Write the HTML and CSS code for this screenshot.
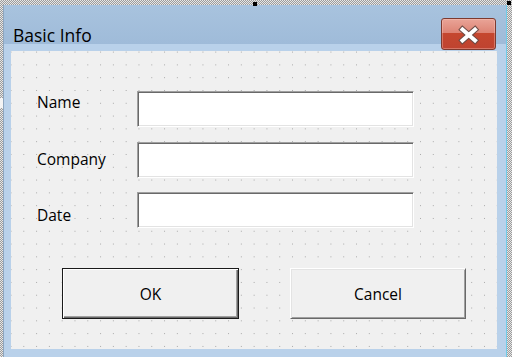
FILE: index.html
```html
<!DOCTYPE html>
<html>
<head>
<meta charset="utf-8">
<link rel="stylesheet" href="styles.css">
</head>
<body>
<div class="sel">
  <span class="handle h-top"></span>
  <span class="handle h-tr"></span>
  <span class="handle-w h-left"></span>
  <div class="win">
    <div class="title">
      <span class="title-text">Basic Info</span>
      <div class="close">
        <svg width="55" height="32" viewBox="0 0 55 32">
          <g stroke-linecap="square">
            <line x1="21.5" y1="11.5" x2="34" y2="22.5" stroke="#6b4a44" stroke-width="6"/>
            <line x1="34" y1="11.5" x2="21.5" y2="22.5" stroke="#6b4a44" stroke-width="6"/>
            <line x1="21.5" y1="11.5" x2="34" y2="22.5" stroke="#ffffff" stroke-width="4"/>
            <line x1="34" y1="11.5" x2="21.5" y2="22.5" stroke="#ffffff" stroke-width="4"/>
          </g>
        </svg>
      </div>
    </div>
    <div class="client">
      <div class="form">
        <div class="labels">
          <div class="label">Name</div>
          <div class="label">Company</div>
          <div class="label">Date</div>
        </div>
        <div class="fields">
          <div class="tb"></div>
          <div class="tb"></div>
          <div class="tb"></div>
        </div>
      </div>
      <div class="buttons">
        <div class="btn ok">OK</div>
        <div class="btn cancel">Cancel</div>
      </div>
    </div>
  </div>
</div>
</body>
</html>
```

FILE: styles.css
```css
html, body {
  margin: 0;
  padding: 0;
  background: #ffffff;
}

.sel {
  position: relative;
  width: 512px;
  height: 357px;
  box-sizing: border-box;
  padding: 5px 5px 0 3px;
  background: conic-gradient(#9c9c9c 25%, #e6e6e6 0 50%, #9c9c9c 0 75%, #e6e6e6 0) 0 0 / 2px 2px;
  font-family: "Open Sans", "Noto Sans", sans-serif;
  color: #000;
}

.handle {
  position: absolute;
  width: 4px;
  height: 4px;
  background: #000;
}
.h-top { left: 253px; top: 2px; }
.h-tr { left: 507px; top: 1px; }

.handle-w {
  position: absolute;
  width: 3px;
  height: 10px;
  background: #f4f4f4;
}
.h-left { left: 0; top: 98px; }

.win {
  height: 100%;
  box-sizing: border-box;
  display: flex;
  flex-direction: column;
  background: #b9d1ea;
  border-left: 1px solid #8ea6bf;
  border-right: 1px solid #6fcde9;
  padding: 0 9px 8px 7px;
}

.title {
  height: 46px;
  flex: none;
  margin: 0 -9px 0 -7px;
  padding-left: 9px;
  display: flex;
  justify-content: space-between;
  align-items: flex-start;
  background: linear-gradient(#a8c3de 0, #9fbbd9 39px, #b9d1ea 39px);
}

.title-text {
  padding-top: 18px;
  font-size: 17.5px;
  line-height: 24px;
  color: #000;
}

.close {
  margin-top: 13px;
  margin-right: 10px;
  width: 55px;
  height: 32px;
  box-sizing: border-box;
  border: 1px solid #7d3a2f;
  border-radius: 3px;
  background: linear-gradient(#e9a497 0, #dd8475 45%, #c5472f 47%, #bf4330 100%);
  box-shadow: inset 0 0 0 1px rgba(255, 210, 200, 0.35);
  overflow: hidden;
}
.close svg {
  display: block;
  margin: -1px 0 0 -1px;
}

.client {
  flex: 1;
  min-height: 0;
  background-color: #f0f0f0;
  background-image: conic-gradient(at 1px 1px, transparent 75%, #a8a8a8 0);
  background-size: 12.8px 12.8px;
  background-position: 12.3px 0.6px;
}

.form {
  display: flex;
  align-items: flex-start;
  height: 137px;
  margin: 40px 0 0 26px;
}

.labels {
  width: 100px;
  padding-top: 1px;
}

.label {
  height: 56.5px;
  font-size: 15.5px;
  line-height: 20px;
}
.label:last-child {
  height: 20px;
}

.fields {
  display: flex;
  flex-direction: column;
  gap: 14.5px;
}

.tb {
  width: 277px;
  height: 36px;
  box-sizing: border-box;
  background: #fff;
  border: 1px solid;
  border-color: #a0a0a0 #ffffff #ffffff #a0a0a0;
  box-shadow: inset 1px 1px 0 #696969, inset -1px -1px 0 #e3e3e3;
}

.buttons {
  display: flex;
  gap: 51px;
  margin: 40px 0 0 51px;
}

.btn {
  width: 177px;
  height: 51px;
  box-sizing: border-box;
  display: flex;
  align-items: center;
  justify-content: center;
  background: #f0f0f0;
  font-size: 15.5px;
  line-height: 20px;
}

.ok {
  border: 1px solid #1a1a1a;
  box-shadow: inset 1px 1px 0 #ffffff, inset -1px -1px 0 #696969, inset -2px -2px 0 #a0a0a0;
}

.cancel {
  width: 176px;
  border: 1px solid;
  border-color: #ffffff #696969 #696969 #ffffff;
  box-shadow: inset 1px 1px 0 #e3e3e3, inset -1px -1px 0 #a0a0a0;
}
```
